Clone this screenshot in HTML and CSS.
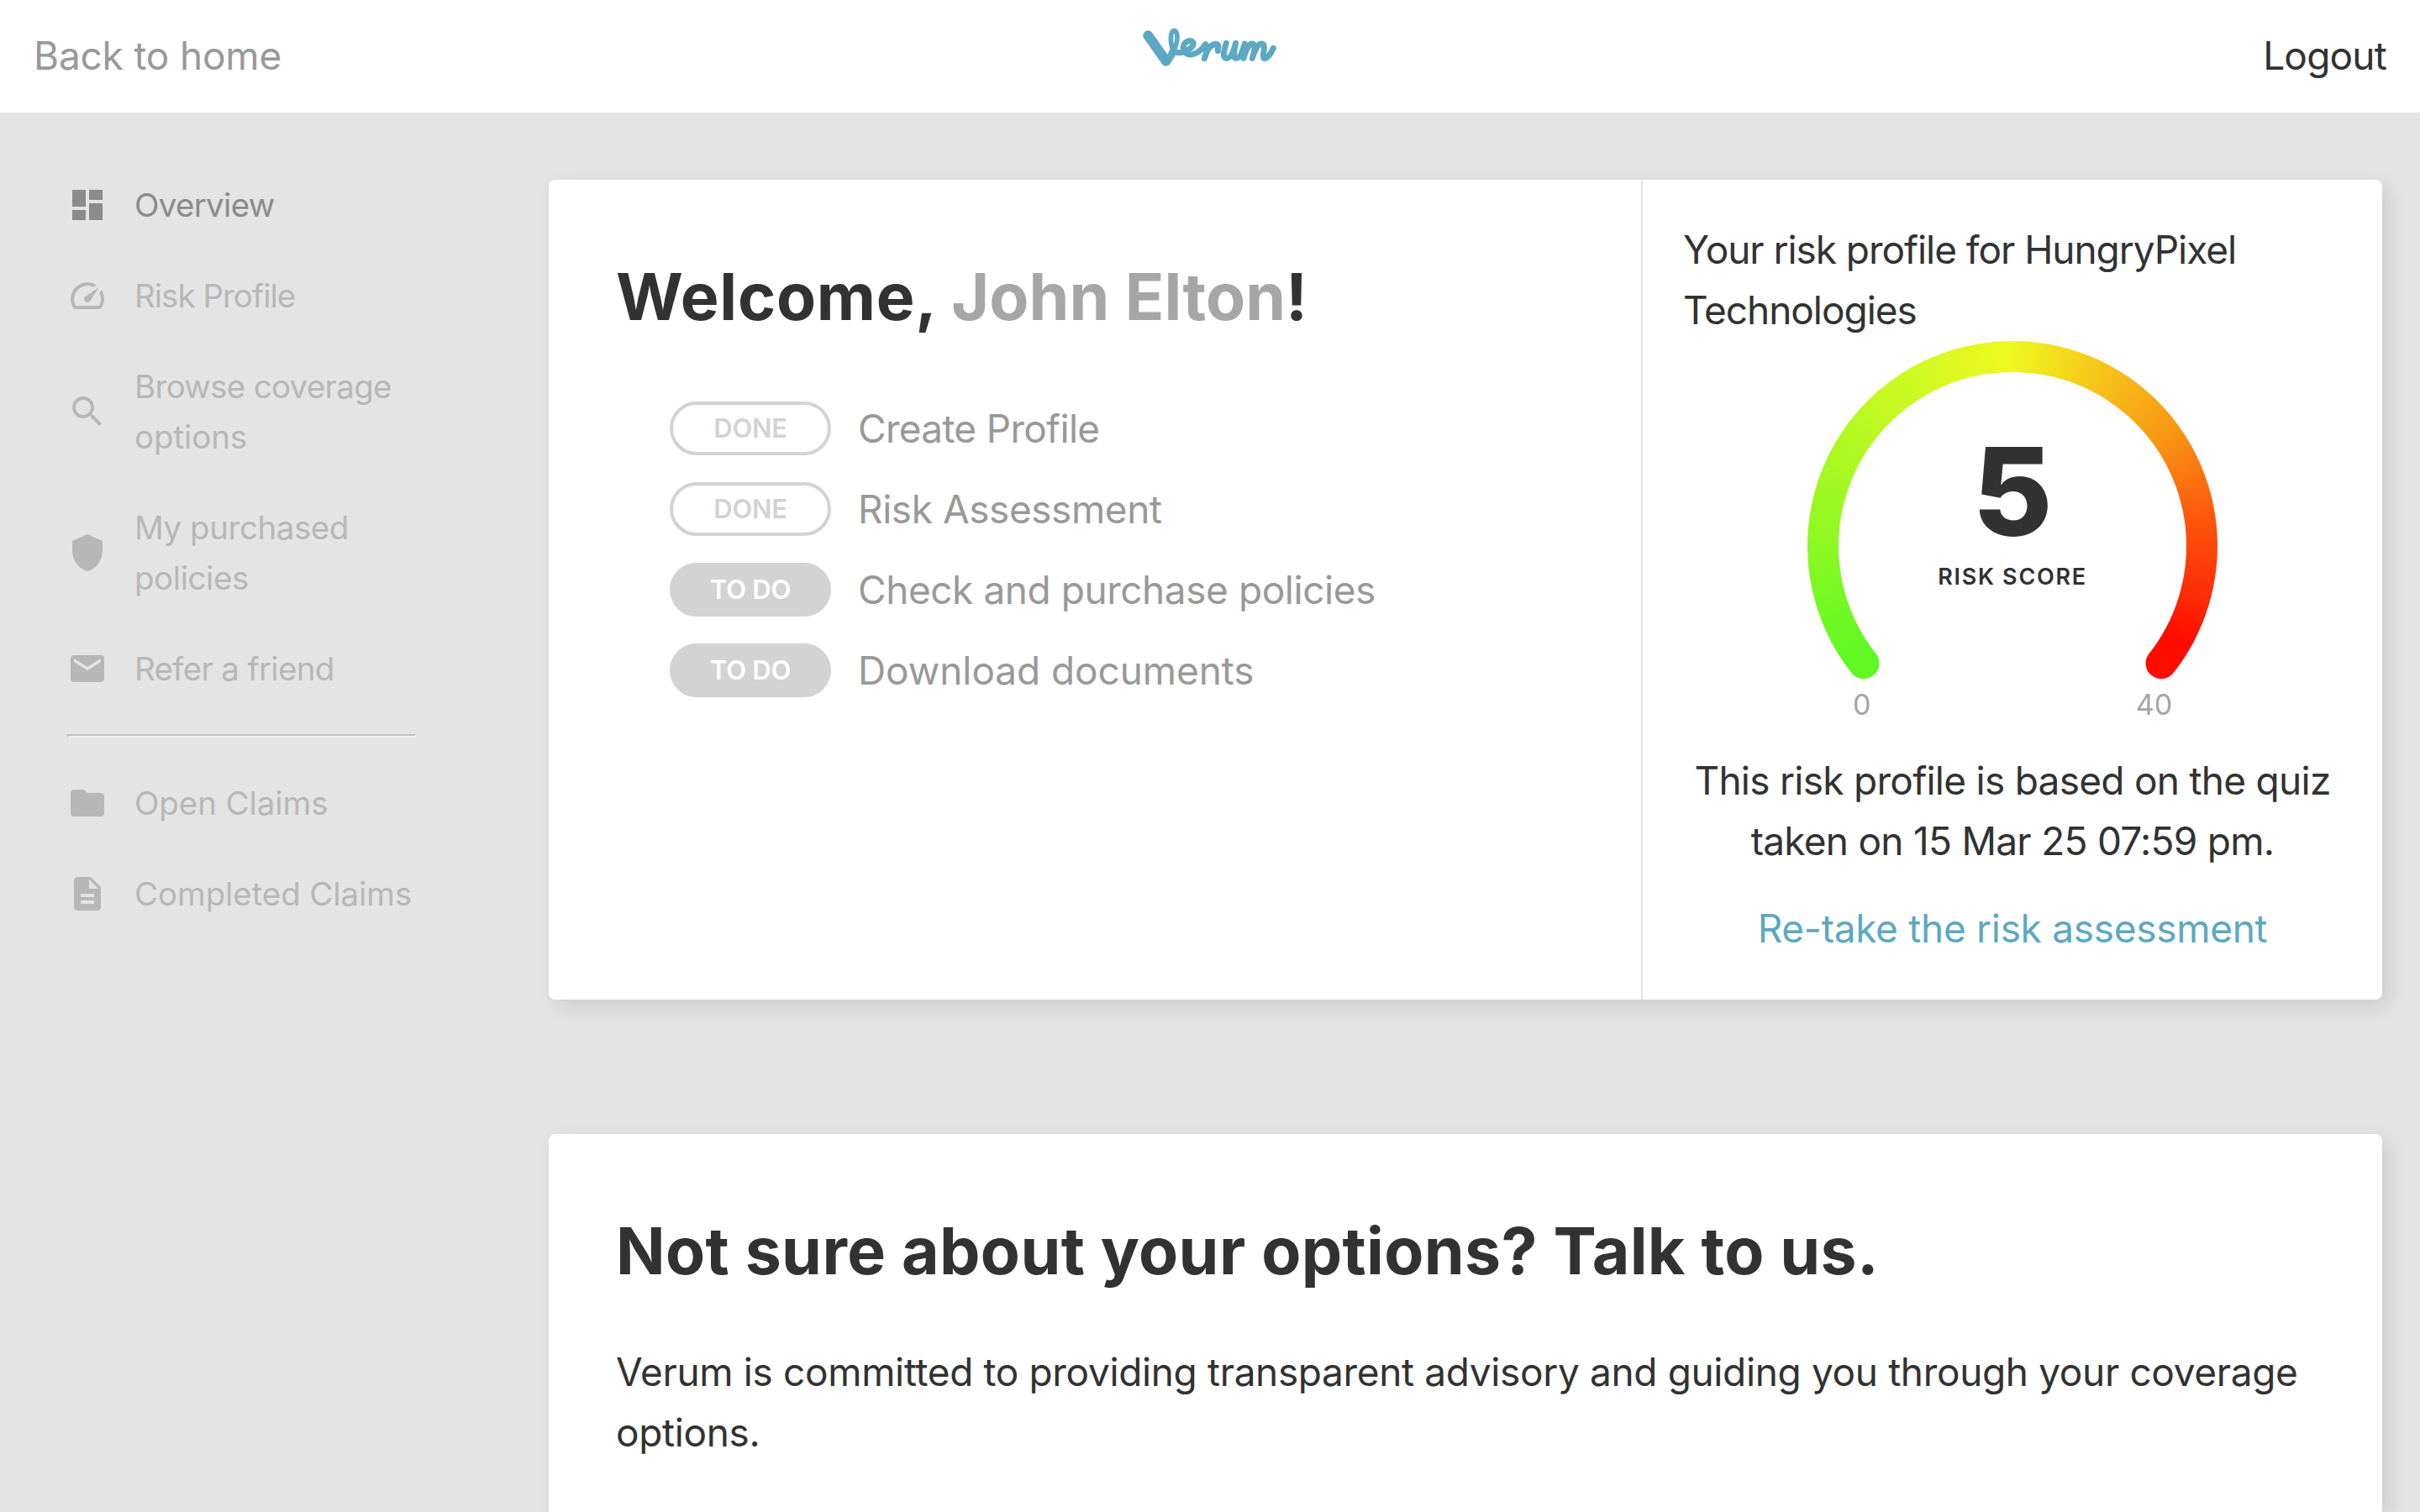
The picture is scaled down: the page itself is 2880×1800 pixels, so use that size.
FILE: index.html
```html
<!DOCTYPE html>
<html lang="en">
<head>
	<meta charset="UTF-8">
	<meta name="viewport" content="width=device-width, initial-scale=1.0">
	<title>Verum - Overview</title>
	<link rel="stylesheet" href="styles.css">
</head>
<body>
	<header class="navbar">
		<a class="back-link" href="#">Back to home</a>
		<svg class="logo" viewBox="0 0 600 240" role="img" aria-label="Verum">
			<path class="logo-thick" d="M79 67 L143 158"/>
			<path class="logo-mid" d="M146 160 C158 146 166 130 170 118"/>
			<path class="logo-loop" d="M166 132 C178 108 186 80 182 62 C178 44 164 46 161 66 C158 98 166 122 182 128"/>
			<path class="logo-thin" d="M180 127 C205 132 246 110 240 92 C233 78 206 88 204 110 C206 146 254 144 284 98 C296 108 286 128 280 149 C290 116 304 94 326 98 C336 104 324 116 328 122 M358 94 C350 120 342 148 360 148 C376 148 386 116 392 94 C386 122 380 148 394 148 C410 148 418 116 424 96 C432 108 424 130 420 148 C430 112 442 90 456 98 C464 108 456 130 451 148 C464 108 476 90 490 98 C500 110 484 140 492 148 C502 152 516 134 526 112"/>
		</svg>
		<a class="logout-link" href="#">Logout</a>
	</header>

	<div class="page">
		<nav class="sidebar">
			<a class="menu-item active" href="#">
				<svg class="icon" viewBox="0 0 24 24"><path d="M3 13h8V3H3v10zm0 8h8v-6H3v6zm10 0h8V11h-8v10zm0-18v6h8V3h-8z"/></svg>
				<span class="tight">Overview</span>
			</a>
			<a class="menu-item" href="#">
				<svg class="icon" viewBox="0 0 24 24"><path d="M20.38 8.57l-1.23 1.85a8 8 0 0 1-.22 7.58H5.07A8 8 0 0 1 15.58 6.85l1.85-1.23A10 10 0 0 0 3.35 19a2 2 0 0 0 1.72 1h13.85a2 2 0 0 0 1.74-1 10 10 0 0 0-.27-10.44zm-9.79 6.84a2 2 0 0 0 2.83 0l5.66-8.49-8.49 5.66a2 2 0 0 0 0 2.83z"/></svg>
				<span class="tighter">Risk Profile</span>
			</a>
			<a class="menu-item" href="#">
				<svg class="icon" viewBox="0 0 24 24"><path d="M15.5 14h-.79l-.28-.27C15.41 12.59 16 11.11 16 9.5 16 5.91 13.09 3 9.5 3S3 5.91 3 9.5 5.91 16 9.5 16c1.61 0 3.09-.59 4.23-1.57l.27.28v.79l5 4.99L20.49 19l-4.99-5zm-6 0C7.01 14 5 11.99 5 9.5S7.01 5 9.5 5 14 7.01 14 9.5 11.99 14 9.5 14z"/></svg>
				<span><span class="tight">Browse coverage</span><br>options</span>
			</a>
			<a class="menu-item" href="#">
				<svg class="icon" viewBox="0 0 24 24"><path d="M12 1L3 5v6c0 5.55 3.84 10.74 9 12 5.16-1.26 9-6.45 9-12V5l-9-4z"/></svg>
				<span class="snug">My purchased<br>policies</span>
			</a>
			<a class="menu-item" href="#">
				<svg class="icon" viewBox="0 0 24 24"><path d="M20 4H4c-1.1 0-1.99.9-1.99 2L2 18c0 1.1.9 2 2 2h16c1.1 0 2-.9 2-2V6c0-1.1-.9-2-2-2zm0 4l-8 5-8-5V6l8 5 8-5v2z"/></svg>
				<span class="tight">Refer a friend</span>
			</a>
			<hr>
			<a class="menu-item" href="#">
				<svg class="icon" viewBox="0 0 24 24"><path d="M10 4H4c-1.1 0-1.99.9-1.99 2L2 18c0 1.1.9 2 2 2h16c1.1 0 2-.9 2-2V8c0-1.1-.9-2-2-2h-8l-2-2z"/></svg>
				<span>Open Claims</span>
			</a>
			<a class="menu-item" href="#">
				<svg class="icon" viewBox="0 0 24 24"><path d="M14 2H6c-1.1 0-1.99.9-1.99 2L4 20c0 1.1.89 2 1.99 2H18c1.1 0 2-.9 2-2V8l-6-6zm2 16H8v-2h8v2zm0-4H8v-2h8v2zm-3-5V3.5L18.5 9H13z"/></svg>
				<span>Completed Claims</span>
			</a>
		</nav>

		<main class="content">
			<section class="card overview">
				<div class="welcome">
					<h1><span class="greeting">Welcome, </span><span class="user">John Elton</span>!</h1>
					<ul class="steps">
						<li><span class="badge done">DONE</span><span class="tight">Create Profile</span></li>
						<li><span class="badge done">DONE</span><span class="snug">Risk Assessment</span></li>
						<li><span class="badge todo">TO DO</span><span class="snug">Check and purchase policies</span></li>
						<li><span class="badge todo">TO DO</span><span>Download documents</span></li>
					</ul>
				</div>
				<div class="risk">
					<p class="risk-title">Your risk profile for HungryPixel<br>Technologies</p>
					<div class="gauge">
						<div class="gauge-arc"></div>
						<div class="gauge-score">5</div>
						<div class="gauge-label">RISK SCORE</div>
						<div class="gauge-range"><span>0</span><span>40</span></div>
					</div>
					<p class="risk-note">This risk profile is based on the quiz<br>taken on 15 Mar 25 07:59 pm.</p>
					<a class="retake" href="#">Re-take the risk assessment</a>
				</div>
			</section>

			<section class="card contact">
				<h2>Not sure about your options? Talk to us.</h2>
				<p>Verum is committed to providing transparent advisory and guiding you through your coverage<br>options.</p>
			</section>
		</main>
	</div>
</body>
</html>
```
FILE: styles.css
```css
* {
	box-sizing: border-box;
}
body {
	font-family: Inter, "Open Sans", sans-serif;
	font-size: 46px;
	line-height: 72px;
	letter-spacing: -0.1px;
	color: #323232;
	margin: 0;
	background-color: #e4e4e4;
}
a {
	color: inherit;
	text-decoration: none;
}
p, h1, h2, ul {
	margin: 0;
	padding: 0;
}
.snug {
	letter-spacing: -0.45px;
}
.tight {
	letter-spacing: -0.7px;
}
.tighter {
	letter-spacing: -1px;
}
.navbar {
	display: grid;
	grid-template-columns: 1fr 200px 1fr;
	align-items: center;
	height: 134px;
	padding: 0 40px 2px;
	background-color: white;
}
.back-link {
	color: #999;
	letter-spacing: -0.2px;
}
.logout-link {
	text-align: right;
	letter-spacing: -0.8px;
}
.logo {
	width: 200px;
	height: 80px;
	margin-top: -12px;
	fill: none;
	stroke: #5da8c2;
	stroke-linecap: round;
	stroke-linejoin: round;
}
.logo-thick {
	stroke-width: 36px;
}
.logo-mid {
	stroke-width: 26px;
}
.logo-loop {
	stroke-width: 17px;
}
.logo-thin {
	stroke-width: 21px;
}
.page {
	display: flex;
}
.sidebar {
	width: 653px;
	padding: 56px 158px 0 80px;
}
.menu-item {
	display: flex;
	align-items: center;
	gap: 32px;
	padding: 24px 0;
	font-size: 38.5px;
	line-height: 60px;
	color: #b7b7b7;
	white-space: nowrap;
}
.menu-item.active {
	color: #8b8b8b;
}
.icon {
	width: 48px;
	height: 48px;
	flex: none;
	fill: currentColor;
}
.sidebar hr {
	margin: 24px 0;
	border: 2px solid;
	border-color: #bfbfbf #eee #eee #bfbfbf;
}
.content {
	width: 2182px;
	padding-top: 80px;
}
.card {
	background-color: white;
	border-radius: 8px;
	box-shadow: 8px 8px 24px rgba(0, 0, 0, 0.11);
}
.overview {
	display: flex;
	height: 976px;
	margin-bottom: 160px;
}
.welcome {
	width: 1300px;
	padding: 79px 80px;
}
h1, h2 {
	font-size: 77px;
	line-height: 120px;
	font-weight: 700;
	letter-spacing: 0.33px;
}
.greeting {
	letter-spacing: 0.7px;
}
.user {
	color: #a6a6a6;
	letter-spacing: 0;
}
.steps {
	list-style: none;
	padding: 49px 0 0 64px;
}
.steps li {
	display: flex;
	align-items: center;
	gap: 32px;
	height: 96px;
	color: #999;
}
.badge {
	width: 192px;
	height: 64px;
	border: 4px solid #d3d3d3;
	border-radius: 32px;
	font-size: 31px;
	line-height: 56px;
	font-weight: 600;
	letter-spacing: -0.3px;
	text-align: center;
}
.done {
	color: #d3d3d3;
}
.todo {
	background-color: #d3d3d3;
	color: white;
}
.risk {
	width: 882px;
	border-left: 2px solid #e4e4e4;
	padding: 47px 48px;
	text-align: center;
	white-space: nowrap;
}
.risk-title {
	text-align: left;
	letter-spacing: -1.05px;
}
.gauge {
	position: relative;
	width: 488px;
	height: 464px;
	margin: 1px auto 23px;
	padding-top: 99px;
}
/* arc runs clockwise from the lower left end to the lower right end */
.gauge-arc {
	position: absolute;
	inset: 0 0 auto 0;
	height: 488px;
	background: conic-gradient(from 225deg, #5ff823 10deg, #92f822 50deg, #c6f922 95deg, #eef920 134deg, #f5c61a 161deg, #f99513 190deg, #fc5a0d 215deg, #ff2c06 240deg, #ff0c00 254deg, #ff0c00 315deg, #5ff823 315deg);
	clip-path: path("M53.2 396 A244 244 0 1 1 434.8 396 A18.5 18.5 0 0 1 405.9 373 A207 207 0 1 0 82.1 373 A18.5 18.5 0 0 1 53.2 396Z");
}
.gauge-score {
	position: relative;
	font-size: 146px;
	line-height: 160px;
	font-weight: 800;
}
.gauge-label {
	position: relative;
	font-size: 27px;
	line-height: 44px;
	font-weight: 600;
	letter-spacing: 1.7px;
}
.gauge-range {
	display: flex;
	justify-content: space-between;
	padding: 106px 54px 0;
	font-size: 34px;
	line-height: 48px;
	color: #a6a6a6;
}
.risk-note {
	letter-spacing: -0.73px;
}
.retake {
	display: block;
	margin-top: 32px;
	color: #5da8c2;
	letter-spacing: -0.3px;
}
.contact {
	height: 450px;
	padding: 79px 80px 0;
	border-radius: 8px 8px 0 0;
}
.contact p {
	margin-top: 48px;
	letter-spacing: -0.36px;
	white-space: nowrap;
}
```
